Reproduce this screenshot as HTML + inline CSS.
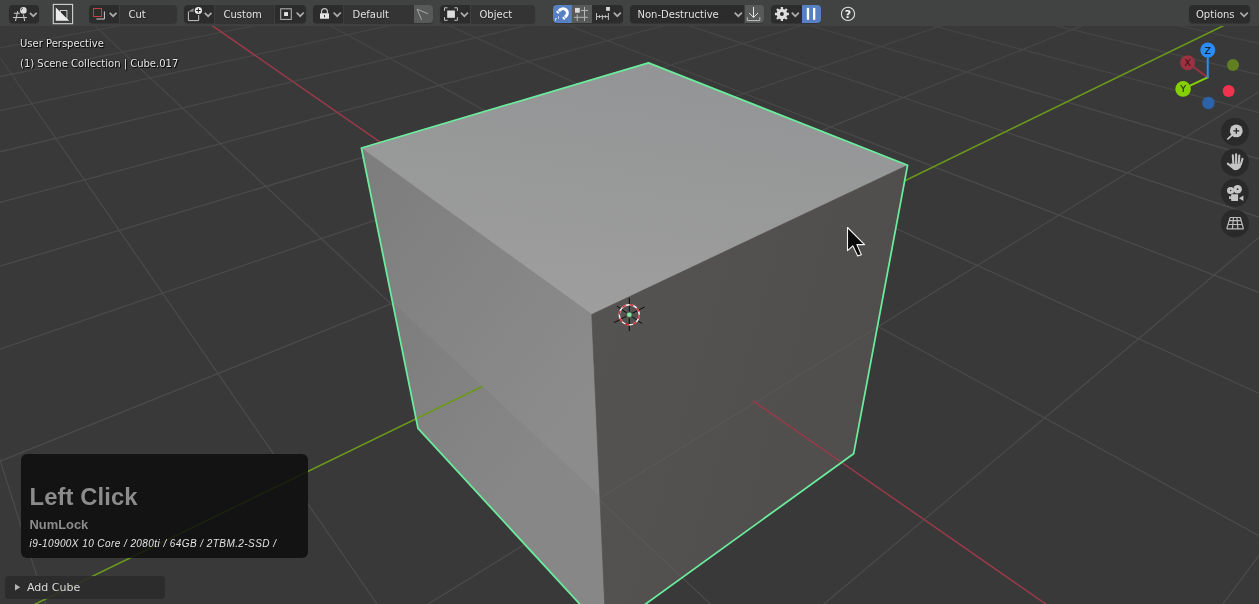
<!DOCTYPE html>
<html><head><meta charset="utf-8"><title>Blender Viewport</title>
<style>
html,body{margin:0;padding:0;background:#393939}
body{width:1259px;height:604px;overflow:hidden;position:relative;font-family:"DejaVu Sans","Liberation Sans",sans-serif;font-size:10px;color:#e2e2e2}
.vp{position:absolute;left:0;top:0;display:block}
.hdr{will-change:transform;position:absolute;left:0;top:0;width:1259px;height:26px;background:#414343}
.b{position:absolute;top:5px;height:18px;background:#343434;box-shadow:0 1px 1px rgba(0,0,0,.22);box-sizing:border-box}
.b.g{background:#585a59}.b.d{background:#2c2c2c}
.b.bl{background:#5680c2}
.rl{border-radius:4px 0 0 4px}.rr{border-radius:0 4px 4px 0}.ra{border-radius:4px}
.t{position:absolute;top:1px;line-height:18px;white-space:nowrap;left:9px;text-shadow:0 1px 1px rgba(0,0,0,.35)}
.ic{position:absolute;left:0;top:0}
.ov{will-change:transform;position:absolute;left:20px;white-space:nowrap;color:#e6e6e6;text-shadow:1px 1px 1px #000,0 0 2px rgba(0,0,0,.8);line-height:14px}
.sc{will-change:transform;position:absolute;left:21px;top:454px;width:287px;height:104px;border-radius:6px;background:rgba(13,13,13,.86)}
.sc div{position:absolute;left:8.5px;white-space:nowrap;font-family:"Liberation Sans",sans-serif}
.op{will-change:transform;position:absolute;left:5px;top:576px;width:160px;height:23px;border-radius:4px;background:rgba(43,43,43,.9)}
</style></head><body>
<svg class="vp" width="1259" height="604" viewBox="0 0 1259 604">
<defs>
<linearGradient id="gt" gradientUnits="userSpaceOnUse" x1="620" y1="320" x2="650" y2="60"><stop offset="0" stop-color="#9e9e9e"/><stop offset="1" stop-color="#939495"/></linearGradient>
<linearGradient id="gl" gradientUnits="userSpaceOnUse" x1="365" y1="200" x2="600" y2="380"><stop offset="0" stop-color="#7e7e7e"/><stop offset="1" stop-color="#8c8c8c"/></linearGradient>
<linearGradient id="gr" gradientUnits="userSpaceOnUse" x1="600" y1="320" x2="880" y2="400"><stop offset="0" stop-color="#555352"/><stop offset="1" stop-color="#504e4d"/></linearGradient>
<linearGradient id="fade" gradientUnits="userSpaceOnUse" x1="0" y1="20" x2="0" y2="160"><stop offset="0" stop-color="#fff" stop-opacity=".62"/><stop offset="1" stop-color="#fff" stop-opacity="1"/></linearGradient>
<mask id="mg" maskUnits="userSpaceOnUse" x="0" y="0" width="1259" height="604"><rect width="1259" height="604" fill="url(#fade)"/></mask>
<clipPath id="cg" clip-rule="evenodd"><path clip-rule="evenodd" d="M0 0H1259V604H0Z M361.4,148.0L648.5,62.9L907.6,165.2L853.6,453.8L606.0,632.6L418.0,428.3Z"/></clipPath>
<path id="gp" d="M1265.0 547.5L1218.3 610.0M-6.0 441.1L47.6 610.0M1265.0 232.2L816.9 610.0M-6.0 48.8L381.1 610.0M1265.0 88.1L418.5 610.0M61.0 -6.0L716.7 610.0M1160.7 -6.0L-6.0 463.7M272.7 -6.0L1265.0 539.0M1033.7 -6.0L-6.0 351.2M379.6 -6.0L1265.0 396.1M907.6 -6.0L-6.0 268.0M487.1 -6.0L1265.0 294.8M782.4 -6.0L-6.0 204.0M595.4 -6.0L1265.0 219.3M658.1 -6.0L-6.0 153.2M704.3 -6.0L1265.0 160.8M534.7 -6.0L-6.0 111.9M813.9 -6.0L1265.0 114.2M412.2 -6.0L-6.0 77.7M924.2 -6.0L1265.0 76.2M290.6 -6.0L-6.0 48.9M1035.3 -6.0L1265.0 44.6M169.8 -6.0L-6.0 24.3M1147.0 -6.0L1265.0 17.9M49.9 -6.0L-6.0 3.0M1259.5 -6.0L1265.0 -5.0"/>
<clipPath id="cb"><polygon points="392.1,301.9 599.2,495.5 877.6,324.5 853.6,453.8 606.0,632.6 418.0,428.3"/></clipPath>
</defs>
<rect width="1259" height="604" fill="#393939"/>
<polygon points="361.4,148.0 648.5,62.9 907.6,165.2 853.6,453.8 606.0,632.6 418.0,428.3" fill="#8e8e8e"/>
<polygon points="361.4,148.0 648.5,62.9 907.6,165.2 591.8,314.5" fill="url(#gt)" stroke="#999" stroke-width=".6"/>
<polygon points="361.4,148.0 591.8,314.5 606.0,632.6 418.0,428.3" fill="url(#gl)" stroke="#868686" stroke-width=".5"/>
<polygon points="591.8,314.5 907.6,165.2 853.6,453.8 606.0,632.6" fill="url(#gr)" stroke="#535150" stroke-width=".7"/>
<polygon points="392.1,301.9 599.2,495.5 606.0,632.6 418.0,428.3" fill="rgba(0,0,0,.035)"/>
<g clip-path="url(#cg)">
<use href="#gp" stroke="rgba(140,140,140,0.21)" stroke-width="1.25" fill="none" mask="url(#mg)"/>
<path d="M166.6 -6.0L1054.4 610.0" stroke="#993a49" stroke-width="1.5" fill="none"/>
<path d="M1265.0 5.5L23.1 610.0" stroke="#6b991c" stroke-width="1.6" fill="none"/>
</g>
<g clip-path="url(#cb)">
<use href="#gp" stroke="rgba(150,150,150,0.10)" stroke-width="1.25" fill="none"/>
<path d="M166.6 -6.0L1054.4 610.0" stroke="#993a49" stroke-width="1.5" fill="none"/>
<path d="M1265.0 5.5L23.1 610.0" stroke="#6b991c" stroke-width="1.6" fill="none"/>
</g>
<polygon points="361.4,148.0 648.5,62.9 907.6,165.2 853.6,453.8 606.0,632.6 418.0,428.3" fill="none" stroke="#6aec9c" stroke-width="1.75" stroke-linejoin="round"/>
<g fill="none"><path d="M629.3 298V331M614.0 322.6L644.5999999999999 307.0M617.0 306.2L642.0 323.6" stroke="#0a0a0a" stroke-width="1"/><circle cx="629.3" cy="314.8" r="3.4" fill="#545352"/><circle cx="629.3" cy="314.8" r="10" stroke="#f2f2f2" stroke-width="1.4"/><circle cx="629.3" cy="314.8" r="10" stroke="#e0202a" stroke-width="1.4" stroke-dasharray="3.93 3.93"/><circle cx="629.3" cy="314.8" r="2.3" fill="#7ce89a"/></g>
<path d="M847.5 227.5V250.7L852.8 245.8L857.7 255.9L861.4 254.8L856.9 244.6H864.6Z" fill="#0a0a0a" stroke="#f4f4f4" stroke-width="1.1" stroke-linejoin="round"/>
<g stroke-linecap="round"><circle cx="1233" cy="65" r="6" fill="#5f7f22"/><circle cx="1208.4" cy="103" r="6.2" fill="#2c62a8"/><path d="M1207.7 77.4L1187.6 62.8" stroke="#9c3141" stroke-width="2"/><path d="M1207.7 77.4L1183.1 88.9" stroke="#86d000" stroke-width="2"/><path d="M1207.7 77.4L1207.8 50.1" stroke="#2a8cf4" stroke-width="2"/><circle cx="1187.6" cy="62.8" r="7.5" fill="#9c3141"/><circle cx="1183.1" cy="88.9" r="7.8" fill="#86d000"/><circle cx="1207.8" cy="50.1" r="7.5" fill="#2a8cf4"/><circle cx="1228.6" cy="91.1" r="6" fill="#f2334f"/></g>
<g font-family="DejaVu Sans,Liberation Sans,sans-serif" font-size="9.5" text-anchor="middle" fill="#111"><text x="1187.6" y="66.3" fill="#3a0c14">X</text><text x="1183.1" y="92.4">Y</text><text x="1207.8" y="53.6">Z</text></g>
<circle cx="1234.9" cy="131.9" r="14" fill="#2a2a2b" fill-opacity=".96"/>
<circle cx="1234.9" cy="162.4" r="14" fill="#2a2a2b" fill-opacity=".96"/>
<circle cx="1234.9" cy="192.8" r="14" fill="#2a2a2b" fill-opacity=".96"/>
<circle cx="1234.9" cy="223.4" r="14" fill="#2a2a2b" fill-opacity=".96"/>
<path d="M1231.8 135.4L1227.9 138.9" stroke="#c6c6c6" stroke-width="1.8" stroke-linecap="round"/><circle cx="1236.3" cy="130.9" r="6.4" fill="#c6c6c6"/><path d="M1233.4 130.9H1239.2M1236.3 128V133.8" stroke="#222" stroke-width="1.2"/>
<g stroke="#c4c4c4" stroke-width="2.1" stroke-linecap="round" fill="none"><path d="M1232.8 155.2L1233.3 163M1236.1 154.3V163M1239.3 155.6L1238.8 163M1242.5 158.8L1240.8 164.5M1227.8 163.6L1231.6 166.8"/></g><path d="M1230.5 163.5H1241.6L1240.6 167.6Q1238.6 170.2 1235.6 170.2Q1232.6 170.2 1230.6 166.5Z" fill="#c4c4c4"/>
<g fill="#c6c6c6"><circle cx="1230.6" cy="190.5" r="3.6"/><circle cx="1237.6" cy="189.2" r="4.3"/><rect x="1231.1" y="194.2" width="7" height="6.7" rx=".6"/><rect x="1229" y="196.4" width="2.4" height="2.4"/><path d="M1239 198.2L1243.4 195.6V201Z"/></g><circle cx="1230.6" cy="190.5" r=".8" fill="#2a2a2b"/><circle cx="1237.6" cy="189.2" r=".9" fill="#2a2a2b"/>
<g stroke="#bcbcbc" stroke-width="1.2" fill="none"><path d="M1230.1 217.5H1240.3M1229.3 220.7H1241.2M1228.2 224.5H1242.3M1226.8 228.8H1243.5M1230.1 217.5L1226.8 228.8M1233.5 217.5L1232.4 228.8M1236.9 217.5L1237.9 228.8M1240.3 217.5L1243.5 228.8"/></g>
</svg>
<div class="hdr">
 <div class="b d ra" style="left:9px;width:30px"></div>
 <div class="b d rl" style="left:89px;width:30px"></div>
 <div class="b rr" style="left:119.5px;width:57.5px"><span class="t">Cut</span></div>
 <div class="b d rl" style="left:184px;width:30px"></div>
 <div class="b" style="left:214.5px;width:59.5px"><span class="t">Custom</span></div>
 <div class="b d rr" style="left:274.5px;width:31.5px"></div>
 <div class="b d rl" style="left:313px;width:30px"></div>
 <div class="b" style="left:343.5px;width:70px"><span class="t">Default</span></div>
 <div class="b g rr" style="left:414px;width:19px"></div>
 <div class="b d rl" style="left:440px;width:30px"></div>
 <div class="b rr" style="left:470.5px;width:64.5px"><span class="t">Object</span></div>
 <div class="b bl rl" style="left:553px;width:18.5px"></div>
 <div class="b g" style="left:572px;width:19.5px"></div>
 <div class="b d rr" style="left:592px;width:30.5px"></div>
 <div class="b d rl" style="left:630px;width:114px"><span class="t" style="left:7.5px">Non-Destructive</span></div>
 <div class="b g rr" style="left:744.5px;width:19.5px"></div>
 <div class="b d rl" style="left:771px;width:30.5px"></div>
 <div class="b bl rr" style="left:802px;width:19px"></div>
 <div class="b d ra" style="left:1189px;width:61px"><span class="t" style="left:7px">Options</span></div>
<svg class="ic" width="1259" height="26" viewBox="0 0 1259 26">
<g stroke="#c4c4c4" stroke-width="1.1" fill="none"><path d="M13.9 13.3H19.9M12.9 17.5H26.9M17.7 11.1L15.5 21M23.4 14.5L24.7 21"/></g>
<circle cx="23.4" cy="10.4" r="3.3" fill="#dcdcdc"/><path d="M21.3 10.3A2.2 2.2 0 0 1 23 8" stroke="#3a3a3a" stroke-width="0.8" fill="none"/>
<path d="M29.9 12.8L33.3 16.2L36.7 12.8" stroke="#acacac" stroke-width="1.7" fill="none"/>
<rect x="53.3" y="4.4" width="19.3" height="19.3" fill="#3c3e3e" stroke="#d2d2d2" stroke-width="1.1"/>
<rect x="60.3" y="10.5" width="6.6" height="7.9" fill="#2e2e2e" stroke="#d0d0d0" stroke-width="1"/>
<polygon points="55.8,7.6 69.2,20.7 55.8,20.7" fill="#ececec"/>
<rect x="93.5" y="8.5" width="8" height="8" fill="none" stroke="#c83c4a" stroke-width="1"/>
<path d="M104.4 11.4V19H96.4" stroke="#cfcfcf" stroke-width="1" fill="none"/>
<path d="M109.7 12.8L113.1 16.2L116.5 12.8" stroke="#acacac" stroke-width="1.7" fill="none"/>
<path d="M188.4 11.8V20.6H198.7V15" stroke="#c4c4c4" stroke-width="1" fill="none"/>
<polygon points="187.9,11.8 193.6,8.2 193.6,11.8" fill="#8c8c8c"/>
<circle cx="198.4" cy="10.5" r="3.6" fill="#ececec"/><path d="M196.2 10.5H200.6M198.4 8.3V12.7" stroke="#222" stroke-width="1"/>
<path d="M204.7 12.8L208.1 16.2L211.5 12.8" stroke="#acacac" stroke-width="1.7" fill="none"/>
<rect x="280.7" y="8.8" width="10.6" height="10.6" fill="none" stroke="#b8b8b8" stroke-width="1"/><rect x="284.1" y="12.1" width="3.9" height="3.9" fill="#e4e4e4"/>
<path d="M296.6 12.5L300.2 16.2L303.8 12.5" stroke="#acacac" stroke-width="1.7" fill="none"/>
<path d="M321.6 13.5V11.6A2.9 2.9 0 0 1 327.4 11.6V13.5" stroke="#c4c4c4" stroke-width="1.2" fill="none"/>
<rect x="320" y="13.3" width="9" height="5.5" rx="0.5" fill="#e4e4e4"/><rect x="324" y="15" width="1" height="2.2" fill="#333"/>
<path d="M333.6 12.5L337.2 16.2L340.8 12.5" stroke="#acacac" stroke-width="1.7" fill="none"/>
<path d="M427.9 13.7L417.1 9.2L421.6 19.8" stroke="#a6a6a6" stroke-width="1" fill="none"/>
<rect x="447.2" y="10.5" width="7.7" height="7.3" fill="#dedede"/>
<path d="M444.5 10.9V7.8H447.6M454.4 7.8H457.4V10.9M457.4 17.2V20.3H454.4M447.6 20.3H444.5V17.2" stroke="#c0c0c0" stroke-width="1" fill="none"/>
<path d="M460.9 12.7L464.4 16.2L467.9 12.7" stroke="#acacac" stroke-width="1.7" fill="none"/>
<path d="M558.86 11.06L560.06 9.86A4.3 4.3 0 0 1 566.14 15.94L564.94 17.14M558.36 11.56L557.09 12.83M564.44 17.64L563.17 18.91" stroke="#fdfdfd" stroke-width="3" fill="none"/>
<path d="M555.5 21V18.5H557M558.5 16.2V18.8" stroke="#c4d2ea" stroke-width="1" fill="none"/>
<rect x="575" y="7.9" width="4.8" height="4.8" fill="#dadada"/><path d="M584.5 7V21M581 10.5H588M574 17.3H588M577.2 14.3V21" stroke="#b4b4b4" stroke-width="1" fill="none"/>
<rect x="606.1" y="7" width="3.8" height="3.8" fill="#dadada"/><path d="M596.5 13V20M608.4 13V20M596.5 16.6H608.4M599.5 15.2V18M602.4 14.8V19.6M605.4 15.2V18" stroke="#c0c0c0" stroke-width="1" fill="none"/>
<path d="M613.8 12.7L617.3 16.2L620.8 12.7" stroke="#acacac" stroke-width="1.7" fill="none"/>
<path d="M734.7 12.7L738.3 16.2L741.9 12.7" stroke="#acacac" stroke-width="1.7" fill="none"/>
<path d="M753.5 7V17.3M749.2 13L753.5 17.4L758 13" stroke="#e6e6e6" stroke-width="1" fill="none"/><path d="M747.3 17.2V20.6H759.8V17.2" stroke="#c0c0c0" stroke-width="1" fill="none"/>
<path d="M785.40 14.00L788.90 14.00M784.37 16.47L786.85 18.95M781.90 17.50L781.90 21.00M779.43 16.47L776.95 18.95M778.40 14.00L774.90 14.00M779.43 11.53L776.95 9.05M781.90 10.50L781.90 7.00M784.37 11.53L786.85 9.05" stroke="#dedede" stroke-width="2.3"/><circle cx="781.9" cy="14.0" r="3.6" fill="none" stroke="#dedede" stroke-width="3.3"/>
<path d="M791.8 12.7L795.3 16.2L798.8 12.7" stroke="#acacac" stroke-width="1.7" fill="none"/>
<rect x="806.8" y="7.9" width="2.3" height="11.9" fill="#fff"/><rect x="813" y="7.9" width="2.3" height="11.9" fill="#fff"/>
<circle cx="848" cy="13.9" r="6.6" fill="none" stroke="#e2e2e2" stroke-width="1.1"/>
<text x="848" y="18.1" text-anchor="middle" font-family="DejaVu Sans,Liberation Sans,sans-serif" font-weight="bold" font-size="11" fill="#f0f0f0">?</text>
<path d="M1240.4 12.7L1244.1 16.3L1247.8 12.7" stroke="#acacac" stroke-width="1.7" fill="none"/>
</svg>
</div>
<div class="ov" style="top:37px">User Perspective</div>
<div class="ov" style="top:57px">(1) Scene Collection | Cube.017</div>
<div class="sc">
 <div style="top:29px;font-size:23.8px;font-weight:bold;color:#8c8c8c;line-height:28px;letter-spacing:.1px">Left Click</div>
 <div style="top:62.6px;font-size:12.9px;font-weight:bold;color:#8c8c8c;line-height:16px">NumLock</div>
 <div style="top:82.6px;font-size:10px;font-style:italic;color:#e4e4e4;line-height:14px;letter-spacing:.43px">i9-10900X 10 Core / 2080ti / 64GB / 2TBM.2-SSD /</div>
</div>
<div class="op"><svg style="position:absolute;left:9px;top:7px" width="8" height="9" viewBox="0 0 8 9"><polygon points="1,1 6.2,4.3 1,7.6" fill="#b4b4b4"/></svg><span style="position:absolute;left:22px;top:0;line-height:23px;color:#d8d8d8;font-size:11px">Add Cube</span></div>
</body></html>
